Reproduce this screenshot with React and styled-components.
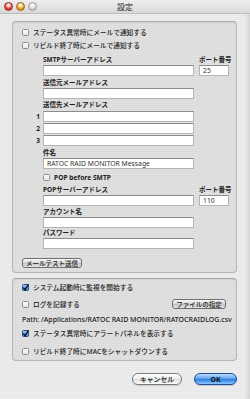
import React from 'react';
import styled, { createGlobalStyle } from 'styled-components';

const GlobalStyle = createGlobalStyle`
  html, body {
    margin: 0;
    padding: 0;
  }
  body {
    font-family: "Noto Sans", "Noto Sans CJK JP", sans-serif;
    color: #1c1c1c;
  }
`;

const Window = styled.div`
  width: 250px;
  height: 399px;
  overflow: hidden;
  display: flex;
  flex-direction: column;
  background: repeating-linear-gradient(to bottom, #eeeeee 0 1px, #e7e7e7 1px 2px);
  box-shadow: inset -5px 0 4px -3px rgba(0, 0, 0, 0.12);
`;

const TitleBar = styled.div`
  height: 14px;
  flex: none;
  display: flex;
  align-items: center;
  position: relative;
  padding-left: 4px;
  gap: 3px;
  background: linear-gradient(to bottom, #eeeeee, #d9d9d9);
  border-bottom: 1px solid #bcbcbc;
  box-sizing: border-box;
`;

const Light = styled.span`
  width: 9px;
  height: 9px;
  border-radius: 50%;
  box-sizing: border-box;
  border: 1px solid ${(p) => p.$edge};
  background: radial-gradient(circle at 50% 30%, #ffffff 0 10%, ${(p) => p.$color} 55%, ${(p) => p.$dark} 100%);
`;

const Title = styled.div`
  position: absolute;
  left: 0;
  right: 0;
  text-align: center;
  font-size: 8px;
  line-height: 14px;
  color: #2a2a2a;
  pointer-events: none;
`;

const Content = styled.div`
  padding: 7px 13px 0 12px;
  display: flex;
  flex-direction: column;
`;

const Panel = styled.div`
  border: 1px solid #b6b6b6;
  border-top-color: #a8a8a8;
  border-radius: 4px;
  background: rgba(0, 0, 0, 0.05);
  box-shadow: inset 0 1px 2px rgba(0, 0, 0, 0.06);
  padding: ${(p) => p.$pad};
  margin-top: ${(p) => p.$top || 0}px;
  display: flex;
  flex-direction: column;
`;

const CheckRow = styled.div`
  height: 10px;
  display: flex;
  align-items: center;
  gap: 4px;
  margin-top: ${(p) => p.$top || 0}px;
  margin-left: ${(p) => p.$left || 0}px;
  font-size: 6.7px;
  font-weight: 500;
  color: #222;
  white-space: nowrap;
`;

const BoxWrap = styled.span`
  width: 7px;
  height: 7px;
  flex: none;
  display: inline-flex;
`;

const Label = styled.div`
  height: 10px;
  line-height: 10px;
  font-size: 6.5px;
  font-weight: 700;
  color: #222;
  white-space: nowrap;
  margin-top: ${(p) => p.$top || 0}px;
  margin-bottom: ${(p) => p.$bottom || 0}px;
`;

const FieldRow = styled.div`
  display: flex;
  gap: 5px;
  margin-top: ${(p) => p.$top || 0}px;
`;

const InputRow = styled.div`
  display: flex;
  align-items: center;
  margin-top: ${(p) => p.$top || 0}px;
`;

const Num = styled.div`
  width: 21px;
  flex: none;
  text-align: right;
  padding-right: 3px;
  box-sizing: border-box;
  font-size: 6.5px;
  font-weight: 700;
`;

const Column = styled.div`
  width: ${(p) => p.$w}px;
  display: flex;
  flex-direction: column;
  margin-left: ${(p) => p.$left || 0}px;
`;

const Field = styled.input`
  width: ${(p) => p.$w || 151}px;
  height: 11px;
  box-sizing: border-box;
  border: 1px solid #b4b4b4;
  border-top-color: #8c8c8c;
  background: #fff;
  padding: 0 3px;
  margin: 0;
  font-family: "Noto Sans", sans-serif;
  font-size: 6.8px;
  color: #333;
  outline: none;
`;

const SmallButton = styled.div`
  height: 10px;
  padding: 0 3px;
  display: inline-flex;
  align-items: center;
  justify-content: center;
  box-sizing: border-box;
  border: 1px solid #6f6f6f;
  border-radius: 3px;
  background: linear-gradient(to bottom, #fafafa, #d2d2d2 55%, #c4c4c4 56%, #e8e8e8);
  font-size: 6.5px;
  font-weight: 500;
  white-space: nowrap;
  color: #222;
  width: ${(p) => p.$w}px;
`;

const TestButtonRow = styled.div`
  margin-top: 9px;
  display: flex;
`;

const LogRow = styled.div`
  display: flex;
  align-items: center;
  justify-content: space-between;
  margin-top: 7px;
  height: 10px;
  padding-right: 5px;
`;

const PathText = styled.div`
  margin-top: 6px;
  height: 9px;
  line-height: 9px;
  font-size: 7px;
  font-weight: 500;
  white-space: nowrap;
`;

const ButtonBar = styled.div`
  display: flex;
  justify-content: flex-end;
  gap: 12px;
  margin-top: 12px;
`;

const PillButton = styled.div`
  width: ${(p) => p.$w}px;
  height: 12px;
  box-sizing: border-box;
  border-radius: 6px;
  display: flex;
  align-items: center;
  justify-content: center;
  font-size: 6.8px;
  font-weight: ${(p) => (p.$primary ? 700 : 500)};
  color: #111;
  border: 1px solid ${(p) => (p.$primary ? '#1d4c99' : '#7a7a7a')};
  background: ${(p) =>
    p.$primary
      ? 'linear-gradient(to bottom, #bcdcff, #5fa3f2 45%, #2f7de0 55%, #8cc6ff)'
      : 'linear-gradient(to bottom, #ffffff, #ececec 50%, #dedede 55%, #ffffff)'};
  box-shadow: 0 1px 1px rgba(0, 0, 0, 0.15);
`;

function Check({ checked }) {
  return (
    <BoxWrap>
      <svg width="7" height="7" viewBox="0 0 7 7">
        <defs>
          <linearGradient id="cbw" x1="0" y1="0" x2="0" y2="1">
            <stop offset="0" stopColor="#ffffff" />
            <stop offset="1" stopColor="#e2e2e2" />
          </linearGradient>
          <linearGradient id="cbb" x1="0" y1="0" x2="0" y2="1">
            <stop offset="0" stopColor="#a8d0ff" />
            <stop offset="1" stopColor="#2e78d8" />
          </linearGradient>
        </defs>
        <rect
          x="0.5"
          y="0.5"
          width="6"
          height="6"
          rx="1"
          fill={checked ? 'url(#cbb)' : 'url(#cbw)'}
          stroke={checked ? '#2a4f8c' : '#8d8d8d'}
          strokeWidth="1"
        />
        {checked && (
          <path d="M1.3 3.6 L3 5.6 L6.6 0.2" fill="none" stroke="#111" strokeWidth="1.3" />
        )}
      </svg>
    </BoxWrap>
  );
}

function CheckItem({ checked, children, top, left }) {
  return (
    <CheckRow $top={top} $left={left}>
      <Check checked={checked} />
      <span>{children}</span>
    </CheckRow>
  );
}

export default function App() {
  return (
    <>
      <GlobalStyle />
      <Window>
        <TitleBar>
          <Light $color="#f0463c" $dark="#a51a14" $edge="#8e2a24" />
          <Light $color="#f5a623" $dark="#b86a00" $edge="#99621a" />
          <Light $color="#d8d8d8" $dark="#a8a8a8" $edge="#9a9a9a" />
          <Title>設定</Title>
        </TitleBar>

        <Content>
          <Panel $pad="5px 5px 4px 9px">
            <CheckItem>ステータス異常時にメールで通知する</CheckItem>
            <CheckItem top={3}>リビルド終了時にメールで通知する</CheckItem>

            <FieldRow $top={5}>
              <Column $w={151} $left={21}>
                <Label>SMTPサーバーアドレス</Label>
                <Field readOnly value="" />
              </Column>
              <Column $w={30}>
                <Label>ポート番号</Label>
                <Field $w={30} readOnly value="25" />
              </Column>
            </FieldRow>

            <Column $w={151} $left={21}>
              <Label $top={2}>送信元メールアドレス</Label>
              <Field readOnly value="" />
              <Label $top={1} $bottom={1}>送信先メールアドレス</Label>
            </Column>
            <InputRow>
              <Num>1</Num>
              <Field readOnly value="" />
            </InputRow>
            <InputRow $top={1}>
              <Num>2</Num>
              <Field readOnly value="" />
            </InputRow>
            <InputRow $top={1}>
              <Num>3</Num>
              <Field readOnly value="" />
            </InputRow>

            <Column $w={151} $left={21}>
              <Label $top={2}>件名</Label>
              <Field readOnly value="RATOC RAID MONITOR Message" />
            </Column>

            <CheckItem top={3} left={21}>
              <b>POP before SMTP</b>
            </CheckItem>

            <FieldRow $top={3}>
              <Column $w={151} $left={21}>
                <Label>POPサーバーアドレス</Label>
                <Field readOnly value="" />
              </Column>
              <Column $w={30}>
                <Label>ポート番号</Label>
                <Field $w={30} readOnly value="110" />
              </Column>
            </FieldRow>

            <Column $w={151} $left={21}>
              <Label $top={1}>アカウント名</Label>
              <Field readOnly value="" />
              <Label>パスワード</Label>
              <Field type="password" readOnly value="" />
            </Column>

            <TestButtonRow>
              <SmallButton $w={60}>メールテスト送信</SmallButton>
            </TestButtonRow>
          </Panel>

          <Panel $top={5} $pad="3px 5px 4px 9px">
            <CheckItem checked>システム起動時に監視を開始する</CheckItem>
            <LogRow>
              <CheckItem>ログを記録する</CheckItem>
              <SmallButton $w={54}>ファイルの指定</SmallButton>
            </LogRow>
            <PathText>Path: /Applications/RATOC RAID MONITOR/RATOCRAIDLOG.csv</PathText>
            <CheckItem checked top={4}>
              ステータス異常時にアラートパネルを表示する
            </CheckItem>
            <CheckItem top={8}>リビルド終了時にMACをシャットダウンする</CheckItem>
          </Panel>

          <ButtonBar>
            <PillButton $w={50}>キャンセル</PillButton>
            <PillButton $w={43} $primary>
              OK
            </PillButton>
          </ButtonBar>
        </Content>
      </Window>
    </>
  );
}
